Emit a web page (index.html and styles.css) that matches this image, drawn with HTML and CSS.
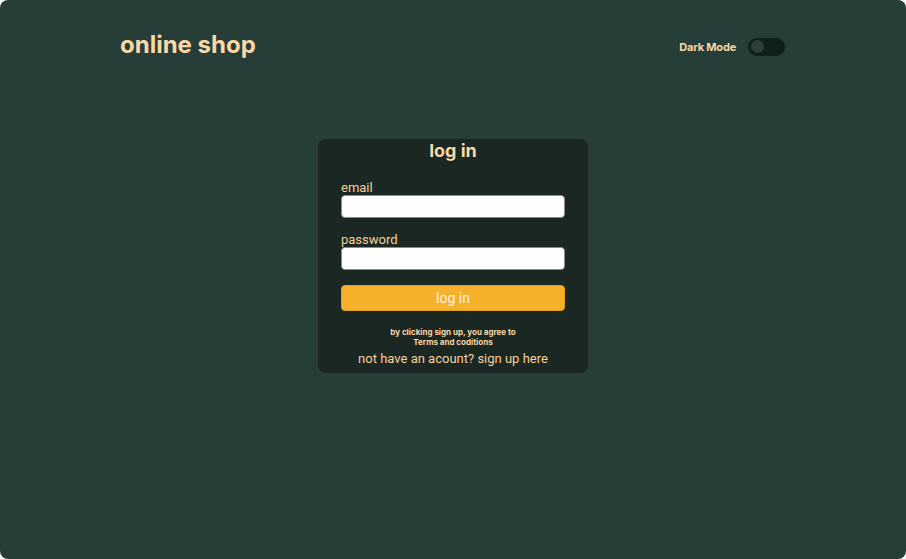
FILE: index.html
```html
<!DOCTYPE html>
<html lang="en">
<head>
<meta charset="utf-8">
<title>online shop</title>
<link rel="stylesheet" href="styles.css">
</head>
<body>
<div class="app">
  <header class="header">
    <h1 class="logo">online shop</h1>
    <div class="mode">
      <span class="mode-label">Dark Mode</span>
      <span class="toggle"><span class="knob"></span></span>
    </div>
  </header>
  <main class="main">
    <form class="card">
      <h2 class="card-title">log in</h2>
      <label class="field">
        <span class="field-label">email</span>
        <input class="input" type="email">
      </label>
      <label class="field field-second">
        <span class="field-label">password</span>
        <input class="input" type="password">
      </label>
      <button class="btn" type="button">log in</button>
      <p class="terms">by clicking sign up, you agree to<br>Terms and coditions</p>
      <p class="signup">not have an acount? sign up here</p>
    </form>
  </main>
</div>
</body>
</html>
```
FILE: styles.css
```css
* { box-sizing: border-box; }
html, body { margin: 0; padding: 0; background: #ffffff; }
body { font-family: Inter, "Noto Sans", sans-serif; }
.app {
  width: 906px;
  height: 559px;
  background: #263d38;
  border-radius: 8px;
  display: flex;
  flex-direction: column;
}
.header {
  display: flex;
  align-items: center;
  justify-content: space-between;
  padding: 0 121px 0 120px;
  height: 88px;
}
.logo {
  margin: 0;
  font-size: 24px;
  font-weight: 700;
  color: #f9d8a6;
}
.mode { display: flex; align-items: center; gap: 12px; margin-top: 5px; }
.mode-label { font-size: 11px; font-weight: 700; color: #f9d8a6; letter-spacing: -0.2px; }
.toggle {
  width: 37px;
  height: 18px;
  border-radius: 9px;
  background: #0e201a;
  display: flex;
  align-items: center;
  padding-left: 3px;
}
.knob { width: 13px; height: 13px; border-radius: 50%; background: #2c3e38; }
.main {
  display: flex;
  justify-content: center;
  padding-top: 51px;
}
.card {
  width: 270px;
  background: #1a2723;
  border-radius: 8px;
  padding: 0 23px 6px;
  display: flex;
  flex-direction: column;
}
.card-title {
  margin: 0;
  text-align: center;
  font-size: 18px;
  font-weight: 700;
  line-height: 24px;
  color: #f9d8a6;
}
.field { display: flex; flex-direction: column; margin-top: 17px; }
.field-second { margin-top: 14px; }
.field-label { font-family: Roboto, sans-serif; font-size: 13px; line-height: 15px; color: #f7d09a; }
.input {
  height: 23px;
  border: 1px solid #8a8a8a;
  border-radius: 4px;
  background: #ffffff;
  margin: 0;
}
.btn {
  margin-top: 15px;
  height: 26px;
  border: 1px solid #e0a020;
  border-radius: 4px;
  background: #f5b12c;
  color: #fbf2e2;
  font-family: Roboto, sans-serif;
  font-size: 14px;
}
.terms {
  margin: 16px 0 0;
  text-align: center;
  font-size: 8px;
  font-weight: 700;
  line-height: 10px;
  color: #f9d8a6;
}
.signup {
  margin: 4px 0 0;
  text-align: center;
  font-family: Roboto, sans-serif;
  font-size: 13px;
  line-height: 16px;
  color: #f7d09a;
}
```
